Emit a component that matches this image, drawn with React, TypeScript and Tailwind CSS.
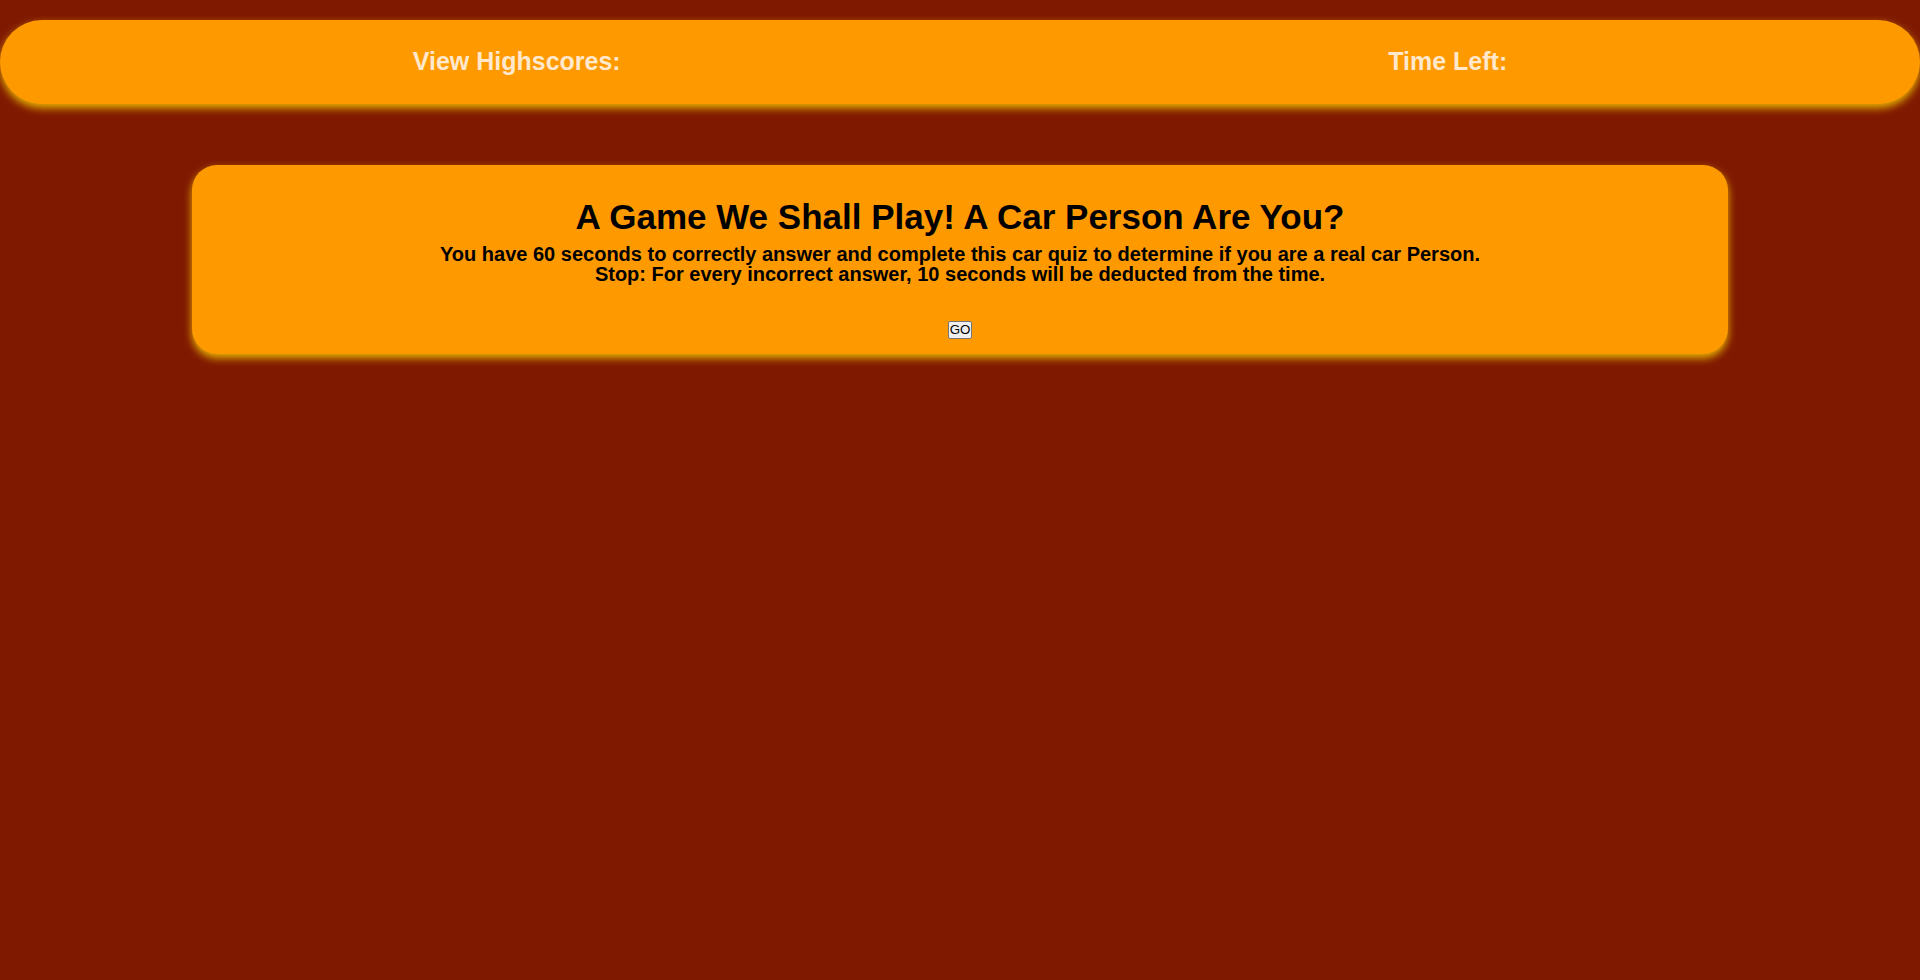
export default function App() {
  return (
    <div
      className="min-h-[980px] w-full bg-[#7f1900] pt-5"
      style={{ fontFamily: '"Liberation Sans", Arial, sans-serif' }}
    >
      <header className="flex h-[84px] items-center justify-around rounded-full bg-[#ff9900] px-[29px] shadow-[0_4px_8px_#e8b400]">
        <span className="text-[25px] font-bold text-[#ffe8cc]">View Highscores:</span>
        <span className="text-[25px] font-bold text-[#ffe8cc]">Time Left:</span>
      </header>

      <main className="mx-auto mt-[61px] w-[80%] rounded-[25px] bg-[#ff9900] px-6 pt-[32px] pb-[15px] text-center text-black shadow-[0_4px_8px_#e8b400]">
        <h1 className="text-[35px] leading-[39px] font-bold">
          A Game We Shall Play! A Car Person Are You?
        </h1>
        <p className="mt-[8px] text-[20px] leading-[20px] font-bold">
          You have 60 seconds to correctly answer and complete this car quiz to determine if you are a real car Person.
          <br />
          Stop: For every incorrect answer, 10 seconds will be deducted from the time.
        </p>
        <div className="mt-[37px] flex justify-center">
          <button className="h-[18px] w-[24px] rounded-[2px] border border-[#767676] bg-[#efefef] p-0 text-[13.33px] leading-[14px] text-black">
            GO
          </button>
        </div>
      </main>
    </div>
  );
}
